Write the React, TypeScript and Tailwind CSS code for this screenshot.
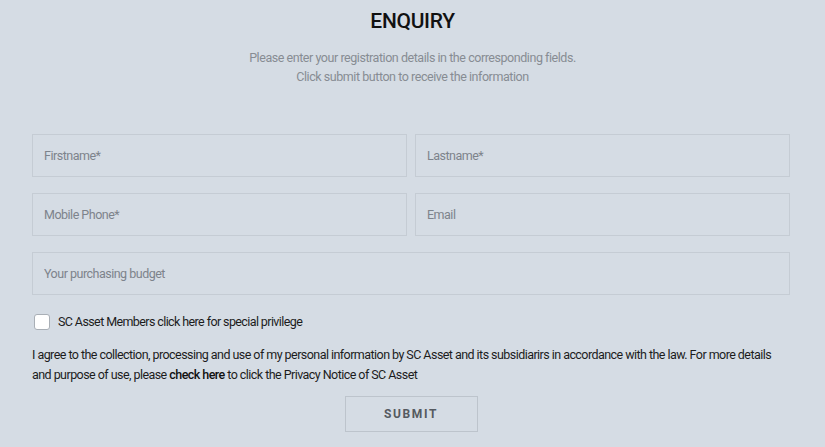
import { useState } from "react";

const inputCls =
    "h-[43px] w-full border border-[#c5ccd4] bg-transparent px-[11px] text-[12.5px] tracking-[-0.5px] text-[#333] placeholder:text-[#7d838b] outline-none";

export default function App() {
    const [member, setMember] = useState(false);

    return (
        <div className="min-h-[447px] w-full bg-[#d5dce4] font-['Roboto',sans-serif]">
            <div className="flex flex-col items-center pt-[7px]">
                <h1 className="text-[21px] font-medium leading-[28px] tracking-[-0.3px] text-[#111]">ENQUIRY</h1>
                <p className="mt-[13px] text-center text-[12.5px] leading-[19px] tracking-[-0.45px] text-[#878c93]">
                    Please enter your registration details in the corresponding fields.
                    <br />
                    Click submit button to receive the information
                </p>
            </div>

            <form className="mx-[32px] mt-[48px] w-[758px]">
                <div className="grid grid-cols-2 gap-x-[8px] gap-y-[16px]">
                    <input className={inputCls} placeholder="Firstname*" />
                    <input className={inputCls} placeholder="Lastname*" />
                    <input className={inputCls} placeholder="Mobile Phone*" />
                    <input className={inputCls} placeholder="Email" />
                    <input className={`${inputCls} col-span-2`} placeholder="Your purchasing budget" />
                </div>

                <label className="mt-[18px] flex items-center gap-[8px] pl-[2px] text-[12.5px] tracking-[-0.6px] text-[#1c1c1c]">
                    <input
                        type="checkbox"
                        checked={member}
                        onChange={(e) => setMember(e.target.checked)}
                        className="h-[16px] w-[16px] appearance-none rounded-[3px] border border-[#a9afb6] bg-white"
                    />
                    SC Asset Members click here for special privilege
                </label>

                <p className="mt-[13px] text-[12.5px] leading-[20px] tracking-[-0.55px] text-[#1c1c1c]">
                    I agree to the collection, processing and use of my personal information by SC Asset and its
                    subsidiarirs in accordance with the law. For more details and purpose of use, please{" "}
                    <span className="font-medium text-[#111]">check here</span> to click the Privacy Notice of SC Asset
                </p>

                <div className="mt-[11px] flex justify-center">
                    <button
                        type="button"
                        className="h-[36px] w-[133px] border border-[#bdc4cc] text-[12px] font-bold tracking-[1.6px] text-[#555a60]"
                    >
                        SUBMIT
                    </button>
                </div>
            </form>
        </div>
    );
}
